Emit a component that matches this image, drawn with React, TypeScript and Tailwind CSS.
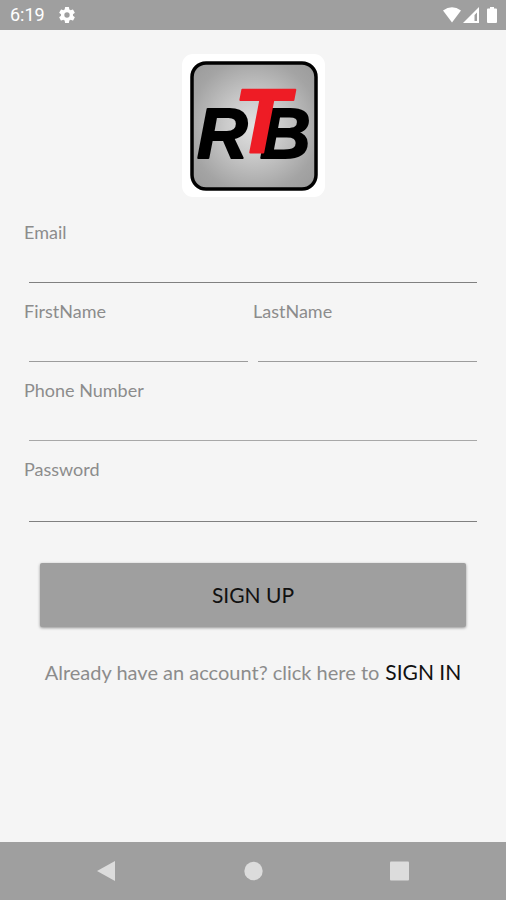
import { useState } from 'react'

interface FieldProps {
  id: string
  label: string
  type?: string
  className: string
}

function Field({ id, label, type = 'text', className }: FieldProps) {
  const [value, setValue] = useState('')

  return (
    <div className="flex min-w-0 flex-1 flex-col">
      <label htmlFor={id} className="text-lg leading-6 text-[#8c8c8c]">
        {label}
      </label>
      <input
        id={id}
        type={type}
        value={value}
        onChange={e => setValue(e.target.value)}
        className={`mx-[5px] min-w-0 border-b bg-transparent text-lg text-[#222] outline-none ${className}`}
      />
    </div>
  )
}

function Logo() {
  return (
    <svg viewBox="0 0 143 143" className="h-[143px] w-[143px]" role="img" aria-label="RTB">
      <defs>
        <radialGradient id="plate" cx="50%" cy="50%" r="66%">
          <stop offset="0" stopColor="#e2e2e2" />
          <stop offset="0.35" stopColor="#cacaca" />
          <stop offset="0.8" stopColor="#a4a4a4" />
          <stop offset="1" stopColor="#9c9c9c" />
        </radialGradient>
      </defs>
      <rect width="143" height="143" rx="11" fill="#fff" />
      <rect x="10" y="9" width="124" height="126" rx="14" fill="url(#plate)" stroke="#000" strokeWidth="3.5" />
      <g
        fontFamily="Liberation Sans, sans-serif"
        fontWeight="700"
        fontStyle="italic"
        strokeWidth="2"
        strokeLinejoin="round"
      >
        <text x="15" y="104" fontSize="70" stroke="#000">R</text>
        <text x="78" y="104" fontSize="70" stroke="#000">B</text>
        <text x="52" y="99" fontSize="90" fill="#ee1c25" stroke="#ee1c25">T</text>
      </g>
    </svg>
  )
}

function StatusBar() {
  return (
    <header className="flex h-[30px] items-center justify-between bg-[#9f9f9f] pr-2 pl-[10px] text-white">
      <div className="flex items-center gap-3">
        <span className="font-['Roboto',sans-serif] text-lg leading-6">6:19</span>
        <svg viewBox="0 0 24 24" className="h-5 w-5" fill="currentColor" aria-hidden="true">
          <path d="M19.14 12.94c.04-.3.06-.61.06-.94s-.02-.64-.07-.94l2.03-1.58a.49.49 0 0 0 .12-.61l-1.92-3.32a.49.49 0 0 0-.59-.22l-2.39.96a7 7 0 0 0-1.62-.94l-.36-2.54a.48.48 0 0 0-.48-.41h-3.84a.48.48 0 0 0-.47.41l-.36 2.54c-.59.24-1.13.57-1.62.94l-2.39-.96a.48.48 0 0 0-.59.22L2.74 8.87a.48.48 0 0 0 .12.61l2.03 1.58c-.05.3-.09.63-.09.94s.02.64.07.94l-2.03 1.58a.49.49 0 0 0-.12.61l1.92 3.32c.12.22.37.29.59.22l2.39-.96c.5.38 1.03.7 1.62.94l.36 2.54c.05.24.24.41.48.41h3.84c.24 0 .44-.17.47-.41l.36-2.54a7 7 0 0 0 1.62-.94l2.39.96c.22.08.47 0 .59-.22l1.92-3.32a.48.48 0 0 0-.12-.61zM12 15.2a3.2 3.2 0 1 1 0-6.4 3.2 3.2 0 0 1 0 6.4z" />
        </svg>
      </div>
      <svg viewBox="0 0 56 18" className="h-[18px] w-14" fill="currentColor" aria-hidden="true">
        <path d="M1 4.500Q10 -2 19 4.500L10 16.500Z" />
        <path fillRule="evenodd" d="M37 1V17H21ZM35 6.500V15H32.500V9Z" />
        <path d="M46 2.500h2V1h4v1.500h2a1 1 0 0 1 1 1V16a1 1 0 0 1-1 1h-8a1 1 0 0 1-1-1V3.500a1 1 0 0 1 1-1z" />
      </svg>
    </header>
  )
}

function NavBar() {
  return (
    <nav className="flex h-[58px] items-center justify-center gap-[122px] bg-[#9f9f9f] text-[#dcdcdc]">
      <button type="button" aria-label="Back" className="h-6 w-6">
        <svg viewBox="0 0 24 24" fill="currentColor">
          <path d="M2 12 20 2v20z" />
        </svg>
      </button>
      <button type="button" aria-label="Home" className="h-6 w-6">
        <svg viewBox="0 0 24 24" fill="currentColor">
          <circle cx="12.500" cy="12" r="9.200" />
        </svg>
      </button>
      <button type="button" aria-label="Recent apps" className="h-6 w-6">
        <svg viewBox="0 0 24 24" fill="currentColor">
          <rect x="3" y="2.500" width="19" height="19" rx="1" />
        </svg>
      </button>
    </nav>
  )
}

export default function App() {
  return (
    <div className="flex min-h-screen flex-col bg-[#f5f5f5] font-['Lato','Noto_Sans',sans-serif]">
      <StatusBar />
      <main className="flex-1 px-6 pt-6">
        <div className="flex justify-center">
          <Logo />
        </div>
        <form className="mt-[23px] flex flex-col" onSubmit={e => e.preventDefault()}>
          <div className="flex flex-col gap-4">
            <Field id="email" label="Email" type="email" className="h-[39px] border-[#808080]" />
            <div className="flex">
              <Field id="firstName" label="FirstName" className="h-[39px] border-[#9c9c9c]" />
              <Field id="lastName" label="LastName" className="h-[39px] border-[#9c9c9c]" />
            </div>
            <Field id="phone" label="Phone Number" type="tel" className="h-[39px] border-[#a8a8a8]" />
            <Field id="password" label="Password" type="password" className="h-[41px] border-[#808080]" />
          </div>
          <button
            type="submit"
            className="mx-4 mt-[41px] h-16 rounded-xs bg-[#9f9f9f] text-[21px] text-[#111] shadow-[0_1px_3px_rgba(0,0,0,0.4)]"
          >
            SIGN UP
          </button>
        </form>
        <p className="mt-[29px] flex items-center justify-center gap-[6px] text-xl leading-8 text-[#8c8c8c]">
          <span>Already have an account? click here to</span>
          <a href="#signin" className="text-[21px] text-[#111]">SIGN IN</a>
        </p>
      </main>
      <NavBar />
    </div>
  )
}
